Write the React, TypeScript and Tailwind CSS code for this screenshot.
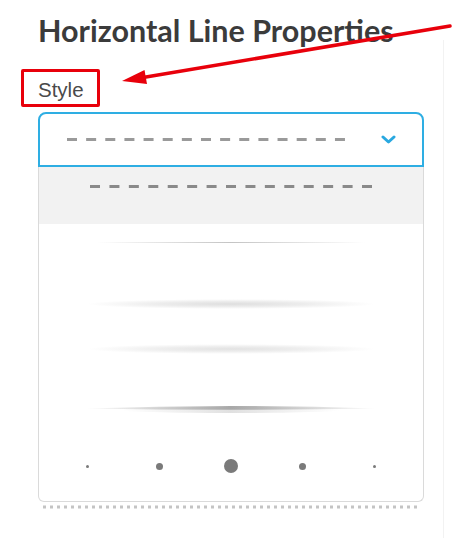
import React from 'react';

function Dashes({ width, color, gap }: { width: number; color: string; gap: number }) {
  return (
    <svg width={width} height={3} className="block">
      <line x1={0} y1={1.5} x2={width} y2={1.5} stroke={color} strokeWidth={3} strokeDasharray={`10 ${gap}`} />
    </svg>
  );
}

function Chevron() {
  return (
    <svg width={15} height={10} viewBox="0 0 15 10" className="block">
      <polyline points="2,2 7.5,7 13,2" fill="none" stroke="#29a8e0" strokeWidth={3} strokeLinecap="round" strokeLinejoin="round" />
    </svg>
  );
}

function TaperedLine() {
  return (
    <svg width={290} height={10} className="block">
      <defs>
        <linearGradient id="tap" x1="0" x2="1" y1="0" y2="0">
          <stop offset="0" stopColor="#bdbdbd" stopOpacity="0.1" />
          <stop offset="0.5" stopColor="#a8a8a8" />
          <stop offset="1" stopColor="#bdbdbd" stopOpacity="0.1" />
        </linearGradient>
        <linearGradient id="tapShadow" x1="0" x2="1" y1="0" y2="0">
          <stop offset="0" stopColor="#e6e6e6" stopOpacity="0" />
          <stop offset="0.5" stopColor="#e0e0e0" />
          <stop offset="1" stopColor="#e6e6e6" stopOpacity="0" />
        </linearGradient>
      </defs>
      <ellipse cx={145} cy={6} rx={110} ry={3} fill="url(#tapShadow)" />
      <path d="M0 4.5 Q145 -0.5 290 4.5 Q145 7 0 4.5Z" fill="url(#tap)" />
    </svg>
  );
}

export default function App() {
  const dots = [3, 7, 14, 7, 3];

  return (
    <div className="relative w-[470px] h-[551px] bg-white overflow-hidden flex" style={{ fontFamily: '"Liberation Sans", Arial, sans-serif' }}>
      <div className="w-[443px] shrink-0">
        <h1 className="pl-[38px] pt-[12px] text-[30.5px] leading-[36px] font-bold text-[#3b3b3b] whitespace-nowrap" style={{ fontFamily: 'Lato, "Noto Sans", sans-serif' }}>
          Horizontal Line Properties
        </h1>

        <div className="mt-[21px] ml-[21px] inline-block border-[3px] border-[#e8000b] rounded-[2px] h-[38px] pl-[14px] pr-[13px]">
          <span className="block h-[32px] text-[20.5px] leading-[36px] text-[#4a4a4a]">Style</span>
        </div>

        <div className="ml-[38px] mt-[5px] w-[386px]">
          <div className="h-[55px] border-2 border-[#2eaee3] rounded-t-[8px] flex items-center justify-between pl-[27px] pr-[26px]">
            <Dashes width={278} color="#9a9a9a" gap={9.14} />
            <Chevron />
          </div>

          <div className="h-[335px] border-x-[1.5px] border-b-[1.5px] border-[#dadada] rounded-b-[6px] flex flex-col items-center">
            <div className="w-full h-[57px] bg-[#f2f2f2] pt-[18px] flex justify-center">
              <Dashes width={282} color="#8a8a8a" gap={9.43} />
            </div>

            <div className="mt-[18px] w-[268px] h-px bg-[linear-gradient(to_right,transparent,#c4c4c4_50%,transparent)]" />

            <div className="mt-[56px] w-[290px] h-[10px] bg-[radial-gradient(ellipse_at_center,#dedede_0%,#ececec_35%,transparent_70%)]" />

            <div className="mt-[35px] w-[290px] h-[10px] bg-[radial-gradient(ellipse_at_center,#e2e2e2_0%,#eeeeee_35%,transparent_70%)]" />

            <div className="mt-[50px]">
              <TaperedLine />
            </div>

            <div className="mt-[45px] w-[358px] h-[14px] grid grid-cols-5">
              {dots.map((d, i) => (
                <div key={i} className="flex items-center justify-center">
                  <span className="block rounded-full bg-[#7a7a7a]" style={{ width: d, height: d }} />
                </div>
              ))}
            </div>
          </div>

          <svg width={378} height={4} className="block ml-[5px] mt-[3px]">
            <line x1={0} y1={2} x2={378} y2={2} stroke="#c4c4c4" strokeWidth={3} strokeDasharray="3 4" />
          </svg>
        </div>
      </div>

      <div className="mt-[40px] w-px h-[498px] bg-[#f2f2f2]" />

      {/* annotation arrow */}
      <svg className="absolute inset-0 pointer-events-none" width={470} height={551}>
        <line x1={450} y1={26} x2={140} y2={78} stroke="#e8000b" strokeWidth={3.5} strokeLinecap="round" />
        <polygon points="122,81 147,84 144.5,70" fill="#e8000b" />
      </svg>
    </div>
  );
}
